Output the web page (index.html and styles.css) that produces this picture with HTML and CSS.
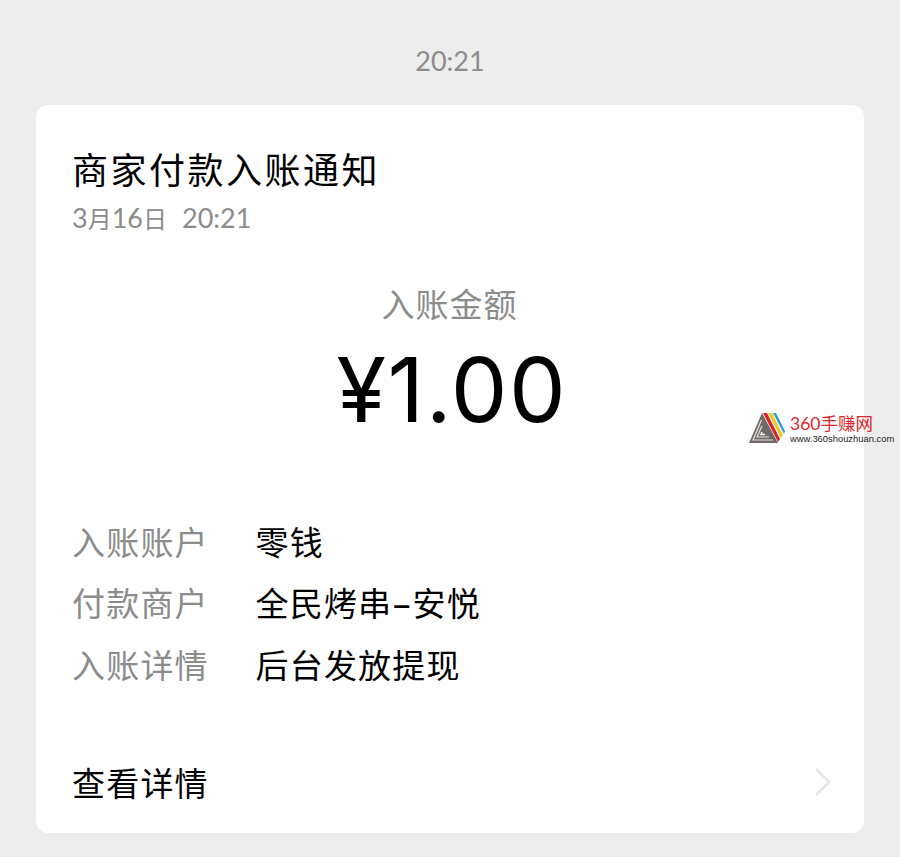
FILE: index.html
```html
<!DOCTYPE html>
<html>
  <head>
    <meta charset="UTF-8">
    <meta name="viewport" content="width=device-width,initial-scale=1">
    <title>商家付款入账通知</title>
    <link rel="stylesheet" href="styles.css">
  </head>
  <body>
    <div class="time">20:21</div>
    <section class="card">
      <h1 class="title">商家付款入账通知</h1>
      <div class="date">3<span class="date-cjk">月</span>16<span class="date-cjk">日</span><span class="date-gap"></span>20:21</div>
      <div class="amount-label">入账金额</div>
      <div class="amount">¥1.00</div>
      <div class="rows">
        <div class="row"><span class="key">入账账户</span><span class="val">零钱</span></div>
        <div class="row"><span class="key">付款商户</span><span class="val">全民烤串<span class="dash">–</span>安悦</span></div>
        <div class="row"><span class="key">入账详情</span><span class="val">后台发放提现</span></div>
      </div>
      <div class="more">
        <span>查看详情</span>
        <svg class="chevron" width="18" height="30" viewBox="0 0 18 30"><path d="M2 2 L15 15 L2 28" fill="none" stroke="#e6e6e6" stroke-width="2.6"/></svg>
      </div>
    </section>
    <div class="mark">
      <svg width="38" height="34" viewBox="0 0 38 34">
        <path d="M14 2 L1 32 L30 32 Z" fill="#6f6a68"/>
        <path d="M13.5 9 L5 29 L25 29" fill="none" stroke="#e4e2e0" stroke-width="1.2"/>
        <path d="M14 15 L9 26 L21 26" fill="none" stroke="#e4e2e0" stroke-width="1.2"/>
        <path d="M14 21 L13 23.5 L17 23.5" fill="none" stroke="#fff" stroke-width="1.6"/>
        <path d="M15 2 L19 2 L32 28 L30 31 Z" fill="#d8232a"/>
        <path d="M20 2 L24 2 L35 24 L33 27 Z" fill="#f2c81e"/>
        <path d="M25 2 L28 2 L37 20 L36 23 Z" fill="#2a9fd8"/>
      </svg>
      <div class="mark-text">
        <div class="mark-name">360手赚网</div>
        <div class="mark-url">www.360shouzhuan.com</div>
      </div>
    </div>
  </body>
</html>
```

FILE: styles.css
```css
body {
  margin: 0;
  background-color: #ededed;
  font-family: "Lato", "Noto Sans CJK SC", sans-serif;
  color: #000;
  height: 857px;
  overflow: hidden;
  position: relative;
}
.time {
  padding-top: 44px;
  height: 61px;
  line-height: 33px;
  text-align: center;
  font-size: 27px;
  color: #8c8c8c;
}
.card {
  margin: 0 36px;
  height: 728px;
  box-sizing: border-box;
  padding: 42px 32px 0 36px;
  background-color: #fff;
  border-radius: 12px;
}
.title {
  margin: 0;
  font-size: 36px;
  font-weight: 400;
  line-height: 46px;
  letter-spacing: 2.5px;
}
.date {
  margin-top: 7px;
  font-size: 27px;
  line-height: 36px;
  color: #8c8c8c;
}
.date-cjk {
  font-size: 24px;
}
.date-gap {
  display: inline-block;
  width: 15px;
}
.amount-label {
  margin: 45px 5px 0 0;
  text-align: center;
  font-size: 33px;
  line-height: 44px;
  color: #8c8c8c;
  letter-spacing: 1px;
}
.amount {
  margin: 14px 0 0 0;
  text-align: center;
  font-family: "Inter", sans-serif;
  font-size: 90px;
  line-height: 100px;
  letter-spacing: 1.5px;
}
.rows {
  margin-top: 71.5px;
}
.row {
  display: flex;
  height: 61.5px;
  line-height: 61.5px;
  font-size: 33px;
  letter-spacing: 1.2px;
}
.key {
  width: 183.5px;
  color: #8c8c8c;
}
.dash {
  font-family: "Inter", sans-serif;
  font-weight: 500;
  font-size: 30px;
  margin: 0 2px;
}
.more {
  margin-top: 58.5px;
  display: flex;
  justify-content: space-between;
  align-items: center;
  height: 54px;
  font-size: 33px;
  letter-spacing: 1.2px;
}
.mark {
  position: absolute;
  left: 748px;
  top: 411px;
  display: flex;
  gap: 4px;
}
.mark-name {
  font-size: 17.5px;
  line-height: 19px;
  margin-top: 3px;
  color: #e0262b;
}
.mark-url {
  font-family: "Liberation Sans", sans-serif;
  font-size: 9.4px;
  line-height: 10px;
  margin-top: 1px;
  color: #222;
  white-space: nowrap;
}
```
